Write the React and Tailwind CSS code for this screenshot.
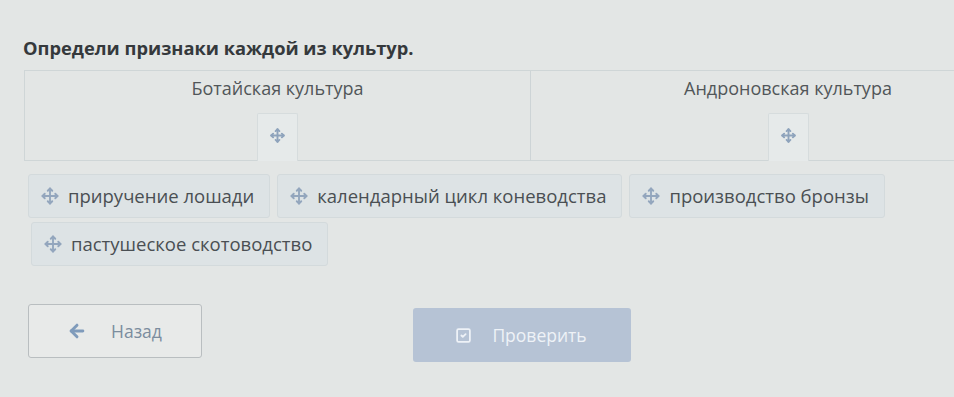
import { Move, ArrowLeft, SquareCheck } from "lucide-react"

const chips = [
  ["приручение лошади", "календарный цикл коневодства", "производство бронзы"],
  ["пастушеское скотоводство"],
]

function Chip({ label }) {
  return (
    <div className="flex items-center gap-[9px] h-[44px] pl-[12px] pr-[15px] rounded-[3px] border border-[#d3dadc] bg-[#dde3e5]">
      <Move className="w-[18px] h-[18px] text-[#93a6bd]" strokeWidth={2.5} />
      <span className="text-[18.5px] text-[#4a4f53]">{label}</span>
    </div>
  )
}

function DropCell({ title }) {
  return (
    <div className="flex flex-col items-center pt-[4px]">
      <div className="text-[18px] text-[#515659] leading-[26px]">{title}</div>
      <div className="mt-[12px] w-[41px] h-[48px] flex justify-center pt-[14px] border border-[#d6dcdd] bg-[#e6eaea] rounded-t-[2px] border-b-0">
        <Move className="w-[15px] h-[15px] text-[#8ea3bc]" strokeWidth={3} />
      </div>
    </div>
  )
}

export default function App() {
  return (
    <div
      className="w-[954px] h-[397px] overflow-hidden bg-[#e3e6e5] text-[#3b3f42]"
      style={{ fontFamily: '"Open Sans", "Noto Sans", sans-serif' }}
    >
      <div className="pt-[35px] pl-[23px]">
        <h1 className="text-[18.3px] font-bold leading-[26px] text-[#35393c]">
          Определи признаки каждой из культур.
        </h1>
      </div>

      <div className="mt-[9px] ml-[24px] w-[1020px] grid grid-cols-[506px_514px] h-[91px] border-t border-l border-b border-[#cfd6d7]">
        <div className="border-r border-[#cdd4d6]">
          <DropCell title="Ботайская культура" />
        </div>
        <div>
          <DropCell title="Андроновская культура" />
        </div>
      </div>

      <div className="mt-[13px] ml-[28px] flex flex-col gap-[4px]">
        {chips.map((row, i) => (
          <div key={i} className={`flex gap-[7px] ${i === 1 ? "ml-[3px]" : ""}`}>
            {row.map((c) => (
              <Chip key={c} label={c} />
            ))}
          </div>
        ))}
      </div>

      <div className="mt-[38px] ml-[28px] flex items-start">
        <button className="w-[174px] h-[54px] flex items-center gap-[24px] pl-[38px] border border-[#b9bec0] bg-[#e8eae9] rounded-[3px]">
          <ArrowLeft className="w-[20px] h-[20px] text-[#7f9bbb]" strokeWidth={3.5} />
          <span className="text-[17.5px] text-[#7b8d9e]">Назад</span>
        </button>
        <button className="ml-[211px] mt-[4px] w-[218px] h-[54px] flex items-center justify-center gap-[20px] bg-[#b6c3d5] rounded-[3px] pr-[2px]">
          <SquareCheck className="w-[17px] h-[17px] text-[#eef2f7]" strokeWidth={2.5} />
          <span className="text-[17.5px] text-[#eef2f7]">Проверить</span>
        </button>
      </div>
    </div>
  )
}
